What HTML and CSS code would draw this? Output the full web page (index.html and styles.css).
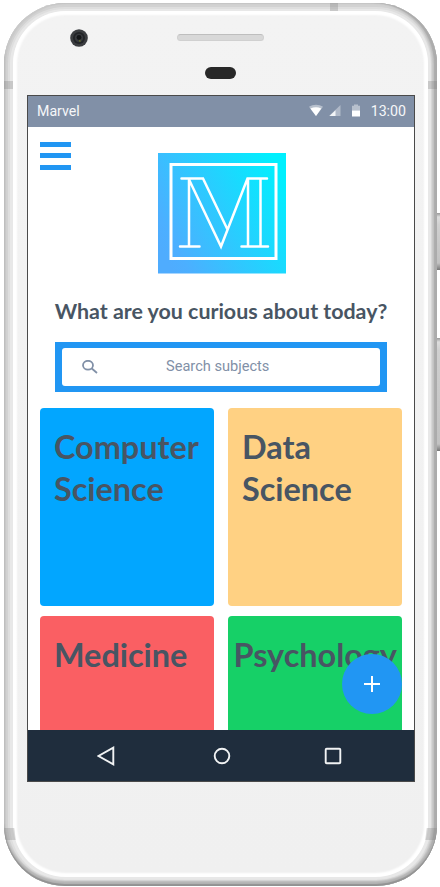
FILE: index.html
```html
<!DOCTYPE html>
<html lang="en">
<head>
<meta charset="utf-8">
<title>Marvel</title>
<link rel="stylesheet" href="styles.css">
</head>
<body>
<div class="phone">
  <i class="band band-top"></i><i class="band band-left"></i><i class="band band-right"></i>
  <i class="band band-low-left"></i><i class="band band-low-right"></i>
  <i class="key key-power"></i><i class="key key-volume"></i>
  <div class="face">
    <div class="hardware">
      <svg class="camera" viewBox="0 0 18 18"><circle cx="9" cy="9" r="8.800" fill="#3b3d40"/><circle cx="9" cy="9" r="6" fill="#222427"/><circle cx="9" cy="9" r="4.200" fill="#37393d"/><circle cx="9" cy="8.500" r="2.400" fill="#131517"/><path d="M8.800 11.500l1.400-1 .6 2-1.200.6z" fill="#65702d"/></svg>
      <i class="speaker"></i>
      <i class="sensor"></i>
    </div>
    <div class="screen">
      <header class="status">
        <span>Marvel</span>
        <svg class="signals" viewBox="0 0 54 14"><path d="M0 2.800C4-.1 10-.1 14 2.800L7 12z" fill="#b7c0cd"/><path d="M1.400 4.400Q7 2 12.300 4.400L7 12z" fill="#fff"/><path d="M20.500 12V11.500L31.500 1V12z" fill="#b0b9c8"/><path d="M20.500 12L26.500 6.300V12z" fill="#f3f5f7"/><path d="M43 6.800V1.700H45V.5H49V1.700H51V6.800z" fill="#b7c0cd"/><path d="M43 6.500H51V12.500H43z" fill="#fff"/></svg>
        <span class="clock">13:00</span>
      </header>
      <main class="content">
        <div class="top">
          <div class="menu"><i></i><i></i><i></i></div>
          <svg class="logo" viewBox="0 0 128.500 121">
            <defs><linearGradient id="sky" x1="0" y1=".75" x2="1" y2=".25"><stop offset="0" stop-color="#4facfe"/><stop offset=".1" stop-color="#4cafff"/><stop offset="1" stop-color="#00f0fe"/></linearGradient></defs>
            <path d="M0 0H129V120.500H0z" fill="url(#sky)"/>
            <g fill="none" stroke="#fff" stroke-width="2.500" stroke-linecap="round" stroke-linejoin="miter">
              <path d="M13 11.500H118V105.500H13z" stroke-width="3"/>
              <path d="M23.500 25.500H45L69.500 76.500M31 27V93.500M22 93.500H41.500M31 26.500L63 93.500L89.500 25.500H109M90 27V93.500M102.500 27V93.500M83.500 93.500H110"/>
            </g>
          </svg>
        </div>
        <h1>What are you curious about today?</h1>
        <div class="search">
          <div class="field">
            <svg viewBox="0 0 16 14"><ellipse cx="6" cy="5.200" rx="5" ry="4.400"/><path d="M9.800 8.500L15 13"/></svg>
            <span>Search subjects</span>
          </div>
        </div>
        <div class="cards">
          <div class="card blue">Computer<br>Science</div>
          <div class="card sand">Data<br>Science</div>
          <div class="card red">Medicine</div>
          <div class="card green">Psychology</div>
        </div>
        <div class="fab"><svg viewBox="0 0 16 16"><path d="M8 0V16M0 8H16"/></svg></div>
      </main>
      <nav class="nav">
        <svg viewBox="0 0 20 20"><path d="M16.300 1.700V18.300L1.500 10z"/></svg>
        <svg viewBox="0 0 20 20"><circle cx="10" cy="10" r="7.300"/></svg>
        <svg viewBox="0 0 20 20"><rect x="2.700" y="2.700" width="14.600" height="14.600" rx="1"/></svg>
      </nav>
    </div>
  </div>
</div>
</body>
</html>
```
FILE: styles.css
```css
* { box-sizing: border-box; }
body { margin: 0; background: #fff; height: 887px; overflow: hidden; font-family: Roboto, "Liberation Sans", sans-serif; }
i { display: block; }
svg { display: block; flex: none; }

.phone {
  position: relative;
  width: 433px; height: 883px;
  margin: 3px 0 0 4px;
  padding: 8px 9px;
  border-radius: 61px;
  background: #e8e8e8;
  box-shadow: inset 0 -2px 1px #929292, inset 0 -5px 2px #b5b5b5, inset -3px 0 1px #acacac, inset -5px 0 2px #c4c4c4, inset 2px 1px 1px #c9c9c9, inset 0 0 0 4px #d2d2d2, inset 0 0 0 6px #dedede;
}
.face {
  height: 866px;
  padding: 0 14px;
  border-radius: 53px;
  background: linear-gradient(#f3f3f3, #f0f0f0);
  box-shadow: inset 0 0 2px 4px #fff;
}
.hardware { position: relative; height: 84px; }
.camera { position: absolute; left: 43px; top: 18px; width: 18px; height: 18px; }
.speaker { position: absolute; left: 150px; top: 23px; width: 87px; height: 7px; border-radius: 4px; background: #d8d8d8; border: 1px solid #d0d0d0; border-top-color: #bebebe; }
.sensor { position: absolute; left: 178px; top: 56px; width: 31px; height: 12px; border-radius: 6px; background: #282828; }

.band { position: absolute; background: rgba(120, 120, 120, .28); }
.band-top { left: 326px; top: 0; width: 8px; height: 8px; }
.band-left { left: 0; top: 78px; width: 9px; height: 8px; }
.band-right { right: 0; top: 78px; width: 9px; height: 8px; }
.band-low-left { left: 1px; top: 825px; width: 10px; height: 12px; transform: skewX(7deg); }
.band-low-right { right: 1px; top: 825px; width: 10px; height: 12px; transform: skewX(-7deg); }
.key { position: absolute; left: 433px; width: 4px; background: linear-gradient(#999, #ddd 4px, #d0d0d0 12px, #c2c2c2 calc(100% - 7px), #777); }
.key-power { top: 210px; height: 57px; }
.key-volume { top: 335px; height: 113px; }

.screen { display: flex; flex-direction: column; width: 388px; height: 687px; border: 1px solid #4a4a4a; background: #fff; }
.status { display: flex; align-items: center; height: 30.500px; padding: 0 8px 1px 9px; background: #8190a7; color: #f6f7f9; font-size: 14.200px; flex: none; }
.signals { width: 54px; height: 14px; margin-left: auto; transform: translateX(-1px); }
.clock { margin-left: 7px; }

.content { position: relative; flex: 1; min-height: 0; overflow: hidden; padding: 0 12px; }
.top { display: flex; padding-top: 14px; }
.menu { display: grid; align-content: start; gap: 6.500px; width: 30.500px; padding-top: 1px; }
.menu i { height: 5px; background: #2196f3; }
.logo { width: 128.500px; height: 121px; margin: 12px 0 0 87px; }
h1 { margin: 23px 0 0; font: 700 21.400px/28px Lato, sans-serif; color: #485563; text-align: center; white-space: nowrap; }
.search { width: 332px; height: 50px; margin: 17px 0 0 15px; padding: 6px 7px; background: #2196f3; }
.field { display: flex; align-items: center; height: 38px; padding: 0 0 2px 19.500px; border-radius: 3px; background: #fff; color: #8190a7; font-size: 14.600px; }
.field svg { width: 16px; height: 14px; margin-top: 2px; fill: none; stroke: #8190a7; stroke-width: 1.800; }
.field span { margin-left: 68.500px; }
.cards { display: grid; grid-template-columns: 174px 174px; grid-auto-rows: 198px; gap: 10px 14px; margin-top: 16px; }
.card { padding: 18px 14px; border-radius: 4px; font: 700 32.400px/42px Lato, sans-serif; color: #485563; }
.blue { background: #02a6ff; }
.sand { background: #ffd183; }
.red { background: #fa5f63; }
.green { background: #16d067; padding-left: 5.500px; }
.fab { position: absolute; right: 12px; bottom: 16px; display: grid; place-items: center; width: 60px; height: 60px; border-radius: 50%; background: #2196f3; }
.fab svg { width: 16px; height: 16px; stroke: #fff; stroke-width: 2; }

.nav { display: flex; align-items: center; gap: 91px; height: 51px; padding-left: 68.500px; background: #1f2d3d; flex: none; }
.nav svg { width: 20px; height: 20px; fill: none; stroke: #f1f3f4; stroke-width: 1.900; }
.nav svg:nth-child(2) { margin-left: 4px; }
```
